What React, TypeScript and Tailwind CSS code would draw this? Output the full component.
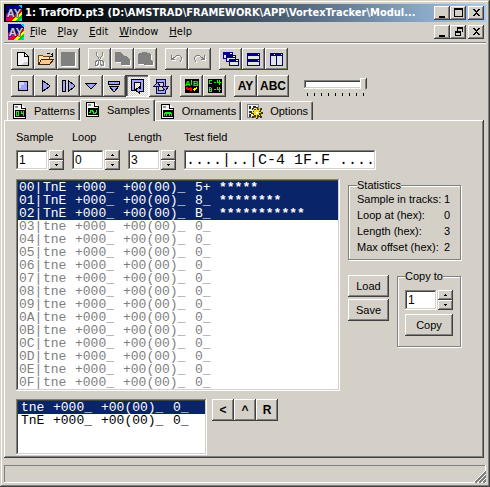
import { useState, type ReactNode } from 'react'
import clsx from 'clsx'

const RAISED = 'bg-[#d4d0c8] shadow-[inset_-1px_-1px_#404040,inset_1px_1px_#fff,inset_-2px_-2px_#808080]'
const SUNKEN =
  'bg-white shadow-[inset_-1px_-1px_#fff,inset_1px_1px_#808080,inset_-2px_-2px_#d4d0c8,inset_2px_2px_#404040]'
const CHECKED =
  'bg-[repeating-conic-gradient(#fff_0_25%,#d4d0c8_0_50%)] bg-size-[2px_2px] shadow-[inset_-1px_-1px_#fff,inset_1px_1px_#404040,inset_2px_2px_#808080]'
const GROUP = 'border border-[#808080] shadow-[1px_1px_#fff,inset_1px_1px_#fff]'

const MENU = ['File', 'Play', 'Edit', 'Window', 'Help']

const ACTIVE_ROWS = [
  { volume: '5+', level: 5 },
  { volume: '8_', level: 8 },
  { volume: 'B_', level: 11 },
]

const STATS = [
  ['Sample in tracks:', '1'],
  ['Loop at (hex):', '0'],
  ['Length (hex):', '3'],
  ['Max offset (hex):', '2'],
]

const Icon = ({ w = 16, h = 16, children }: { w?: number; h?: number; children: ReactNode }) => (
  <svg width={w} height={h} viewBox={`0 0 ${w} ${h}`} shapeRendering="crispEdges" fill="none" className="shrink-0">
    {children}
  </svg>
)

// disabled glyphs get a white copy one pixel down and right
const Etched = ({ d, solid, w, h }: { d: string; solid?: boolean; w?: number; h?: number }) => (
  <Icon w={w} h={h}>
    <path d={d} transform="translate(1 1)" fill={solid ? '#fff' : 'none'} stroke="#fff" />
    <path d={d} fill={solid ? '#808080' : 'none'} stroke="#808080" />
  </Icon>
)

const AppLogo = () => (
  <Icon>
    <rect width="16" height="16" fill="#000080" />
    <path d="M0 16V9L4 5l5 11z" fill="#c000a0" />
    <path d="M1 16L16 4v4L6 16z" fill="#f00" />
    <path d="M5 16L16 7v4l-6 5z" fill="#ff0" />
    <path d="M9 16l7-6v4l-2 2z" fill="#0c0" />
    <path d="M12 16l4-4v4z" fill="#0cf" />
    <path d="M12 0h4v4z" fill="#0cf" />
    <text
      x="8"
      y="12"
      textAnchor="middle"
      className="font-['Liberation_Sans',sans-serif] text-[11px] font-bold"
      fill="#c8c8d8"
      stroke="#202040"
      strokeWidth="1"
      paintOrder="stroke"
    >
      AY
    </text>
  </Icon>
)

const NewIcon = () => (
  <Icon w={12} h={14}>
    <path d="M.5.5h7l4 4v9H.5z" fill="#f4f4f4" stroke="#000" />
    <path d="M8 10h3v3H4z" fill="#d0d0d0" />
    <path d="M7.5.5v4h4" stroke="#000" />
  </Icon>
)

const OpenIcon = () => (
  <Icon w={16} h={14}>
    <path d="M.5 12.5v-9h4l1 1h6v3" fill="#ffe0b0" stroke="#804000" />
    <path d="M.5 12.5l3-5h12l-4 5z" fill="#ffc890" stroke="#402000" />
    <path d="M9 1.5h3M12.5 2.5h1M14.5 1v4M12 4.5h3" stroke="#000" />
  </Icon>
)

const CascadeIcon = () => (
  <Icon w={16} h={15}>
    {[0, 3, 6].map((n) => (
      <g key={n} transform={`translate(${n} ${n + (n > 3 ? 1 : 0)})`}>
        <path d="M0 0h10v7H0z" fill="#000080" />
        <path d="M1 3h8v3H1z" fill="#e4e4e4" />
        <path d="M7 1h2v1H7z" fill="#fff" />
      </g>
    ))}
  </Icon>
)

const TileIcon = ({ vertical }: { vertical?: boolean }) => (
  <Icon w={13} h={13}>
    <path d="M0 0h13v13H0z" fill="#000080" />
    {vertical ? (
      <path d="M1 3h5v9H1zM7 3h5v9H7zM4 1h1v1H4zM11 1h1v1h-1z" fill="#e4e4e4" />
    ) : (
      <path d="M1 3h11v3H1zM1 9h11v3H1zM11 1h1v1h-1zM11 7h1v1h-1z" fill="#e4e4e4" />
    )}
  </Icon>
)

const StopIcon = () => (
  <Icon w={10} h={10}>
    <path d="M.5.5h9v9h-9z" fill="#a0a4f8" stroke="#000" />
    <path d="M1 1h5v3H3v3H1z" fill="#d0d0ff" />
  </Icon>
)

const PlayIcon = ({ bar }: { bar?: boolean }) => (
  <Icon w={13} h={14}>
    {bar && <path d="M.5 1.5h3v11h-3z" fill="#a0a4f8" stroke="#000" />}
    <path d={bar ? 'M6.5 1.5v11l6-5v-1z' : 'M3.5 1.5v11l7-5v-1z'} fill="#a0a4f8" stroke="#000" />
  </Icon>
)

const DownIcon = ({ bar }: { bar?: boolean }) => (
  <Icon w={13} h={11}>
    {bar && <path d="M.5.5h11v3H.5z" fill="#a0a4f8" stroke="#000" />}
    <path d={bar ? 'M1.5 5.5h9l-4 5h-1z' : 'M.5 2.5h11l-5 5h-1z'} fill="#a0a4f8" stroke="#000" />
  </Icon>
)

const LoopIcon = () => (
  <Icon w={14} h={15}>
    <path d="M.5 11.5V.5h12v12h-4v2l-4-3.5 4-3.5v2h1v-6h-6v8z" fill="#a0a4f8" stroke="#000" />
  </Icon>
)

const LoopAllIcon = () => (
  <Icon w={16} h={15}>
    <path d="M3.5 5.5v-5h9v7M12.5 9.5v5h-9v-7" stroke="#101040" />
    <path d="M5.5 6.5v-3h5v4M10.5 8.5v3h-5v-5" stroke="#101040" />
    <path d="M4 1h8v2H4zM4 12h8v2H4zM4 3h1v9H4zM11 3h1v9h-1z" fill="#a0a4f8" />
    <path d="M.5 7.5l4-4 3 4zM8.5 7.5h7l-3 4z" fill="#a0a4f8" stroke="#101040" />
  </Icon>
)

const TracksIcon = () => (
  <Icon w={14} h={14}>
    <path d="M0 0h14v14H0z" fill="#000" />
    <path d="M6.5 1v5" stroke="#0f0" />
    <text x="0" y="7" className="font-['Liberation_Sans',sans-serif] text-[8px] font-bold" fill="#0f0">
      A
    </text>
    <text x="8" y="7" className="font-['Liberation_Sans',sans-serif] text-[8px] font-bold" fill="#0f0">
      B
    </text>
    <path d="M1 8h2v1h2V8l2 2v2H5v-1H2v-1H1z" fill="#f00" />
    <path d="M8 10l2-2v1h1V8h1v2h-1v1h-1v2L8 11z" fill="#ff0" />
  </Icon>
)

const TransposeIcon = () => (
  <Icon w={14} h={14}>
    <path d="M0 0h14v14H0z" fill="#000" />
    <path
      d="M1.5 1v4M1 1.5h3M1 4.5h3M6 3.5h2M9.5 1v3M9 3.5h4M11.5 1v5M1.5 8v5M1 8.5h2M1 10.5h2M1 12.5h3M3.5 9v3M6 10.5h2M9.5 8v3M9 10.5h4M11.5 8v5"
      stroke="#0f0"
    />
  </Icon>
)

const PageIcon = ({ kind }: { kind: 'pattern' | 'sample' | 'ornament' }) => (
  <Icon w={14} h={15}>
    <path d="M.5.5h8l4 4v10H.5z" fill="#f4f4f4" stroke="#000" />
    <path d="M8.5.5v4h4" fill="#fff" stroke="#000" />
    <path d="M2 2h3v2H2z" fill="#909090" />
    <path d="M2 6h10v7H2z" fill="#000" />
    {kind === 'pattern' && <path d="M3.5 7.5h2v4h-2zM8.5 7v3M8 9.5h3M10.5 7v5" stroke="#0f0" />}
    {kind === 'sample' && <path d="M3 10.5h1v-2h2v1h1v2h2v-1h1v-2h1" stroke="#0f0" />}
    {kind === 'ornament' && <path d="M3.5 12v-3h1v-1h2v1h1v-1h2v1h1v3M5.5 9v3M8.5 9v3" stroke="#0f0" />}
  </Icon>
)

const OptionsIcon = () => (
  <Icon w={16} h={15}>
    <path d="M.5.5h11v13H.5z" fill="#f0f0f0" stroke="#808080" />
    <path d="M2 2h2v3H2zM2 7h3v2H2zM2 10h2v3H2zM6 2h3v2H6z" fill="#303030" />
    <path d="M9 3h2v2h2V4h2v2h-1v2h2v2h-2v2h1v2h-2v-1h-2v2H9v-2H7v1H5v-2h1v-2H4V8h2V6H5V4h2v1h2z" fill="#403800" />
    <path d="M9 4h1v2h2V5h1v2h-1v1h2v1h-2v2h1v1h-1v-1h-2v3H9v-3H7v1H6v-1h1V9H5V8h2V7H6V5h1v1h2z" fill="#f0e020" />
    <path d="M9 8h2v2H9z" fill="#fff" />
  </Icon>
)

const CAPTION = {
  Minimize: 'M3 9h6v2H3z',
  Maximize: 'M2 1h9v9H2zM3 3v6h7V3z',
  Restore: 'M5 1h6v5H9v4H3V5h2zM6 3v2h3v1h1V3zM4 7v2h4V7z',
  Close: 'M3 2h2v1h1v1h1V3h1V2h2v1H9v1H8v1H7v1h1v1h1v1h1v1H8V8H7V7H6v1H5v1H3V8h1V7h1V6h1V5H5V4H4V3H3z',
}

const CaptionButtons = ({ names }: { names: (keyof typeof CAPTION)[] }) => (
  <div className="ml-auto flex pr-0.5">
    {names.map((name) => (
      <button
        key={name}
        type="button"
        aria-label={name}
        className={clsx('flex h-3.5 w-4 items-center justify-center', name === 'Close' && 'ml-0.5', RAISED)}
      >
        <Icon w={13} h={12}>
          <path d={CAPTION[name]} fill="#000" fillRule="evenodd" />
        </Icon>
      </button>
    ))}
  </div>
)

const ToolButton = ({
  label,
  wide,
  down,
  disabled,
  children,
}: {
  label: string
  wide?: boolean
  down?: boolean
  disabled?: boolean
  children: ReactNode
}) => (
  <button
    type="button"
    aria-label={label}
    aria-pressed={down}
    disabled={disabled}
    className={clsx(
      'flex h-[22px] items-center justify-center text-[12px] leading-none font-bold',
      wide ? 'w-8' : 'w-[23px]',
      down ? CHECKED : RAISED,
    )}
  >
    {children}
  </button>
)

const PushButton = ({ className, children }: { className?: string; children: ReactNode }) => (
  <button type="button" className={clsx('h-[22px] text-center', RAISED, className)}>
    {children}
  </button>
)

const Spinner = ({ id, initial, label }: { id: string; initial: number; label?: string }) => {
  const [value, setValue] = useState(initial)
  return (
    <div className="flex gap-px">
      <input
        id={id}
        aria-label={label}
        value={value}
        onChange={(e) => setValue(Number(e.target.value) || 0)}
        className={clsx('h-5 w-8 px-[3px] text-[12px] outline-none', SUNKEN)}
      />
      <div className="flex w-[15px] flex-col">
        {[1, -1].map((step) => (
          <button
            key={step}
            type="button"
            aria-label={step > 0 ? 'Increase' : 'Decrease'}
            onClick={() => setValue(value + step)}
            className={clsx('flex h-2.5 items-center justify-center', RAISED)}
          >
            <Icon w={3} h={2}>
              <path d={step > 0 ? 'M1 0h1v1h1v1H0V1h1z' : 'M0 0h3v1H2v1H1V1H0z'} fill="#000" />
            </Icon>
          </button>
        ))}
      </div>
    </div>
  )
}

const SampleRow = ({ index }: { index: number }) => {
  const row = ACTIVE_ROWS[index]
  return (
    <tr className={row ? 'bg-[#0a246a] text-white' : 'text-[#808080]'}>
      <td className="pl-px">{index.toString(16).toUpperCase().padStart(2, '0')}|</td>
      <td>{row ? 'TnE' : 'tne'}</td>
      <td>+000_</td>
      <td>+00(00)_</td>
      <td>{row ? row.volume : '0_'}</td>
      <td className="font-bold">{row && '*'.repeat(row.level)}</td>
    </tr>
  )
}

const Tab = ({ icon, selected, children }: { icon: ReactNode; selected?: boolean; children: ReactNode }) => (
  <button
    type="button"
    role="tab"
    aria-selected={!!selected}
    className={clsx(
      'flex items-center gap-[7px] rounded-t-xs border-t border-r border-l border-t-white border-r-[#404040] border-l-white bg-[#d4d0c8] pr-1 pl-[5px] shadow-[inset_-1px_0_#808080]',
      selected ? 'relative z-10 -mb-px h-[22px] pb-0.5' : 'h-[19px]',
    )}
  >
    {icon}
    {children}
  </button>
)

export default function App() {
  const [volume, setVolume] = useState(8)

  return (
    <div className="flex min-h-screen flex-col bg-[#d4d0c8] p-1 font-['Liberation_Sans',Arial,sans-serif] text-[11px] leading-3 text-black shadow-[inset_-1px_-1px_#404040,inset_1px_1px_#d4d0c8,inset_-2px_-2px_#808080,inset_2px_2px_#fff]">
      <header className="flex h-[18px] items-center bg-linear-to-r from-black to-[#a6caf0] pl-0.5 text-white">
        <AppLogo />
        <h1 className="ml-[3px] min-w-0 truncate font-['DejaVu_Sans_Condensed','DejaVu_Sans',sans-serif] text-[11px] leading-4 font-bold">
          1: TrafOfD.pt3 (D:\AMSTRAD\FRAMEWORK\APP\VortexTracker\Modul...
        </h1>
        <CaptionButtons names={['Minimize', 'Maximize', 'Close']} />
      </header>

      <nav className="flex h-5 items-center pl-1">
        <AppLogo />
        <div className="flex gap-[11px] pl-1.5 font-['DejaVu_Sans_Condensed','DejaVu_Sans',sans-serif]">
          {MENU.map((item) => (
            <button key={item} type="button">
              <u>{item[0]}</u>
              {item.slice(1)}
            </button>
          ))}
        </div>
        <CaptionButtons names={['Minimize', 'Restore', 'Close']} />
      </nav>
      <div className="h-0.5 border-t border-b border-t-[#808080] border-b-white" />

      <div className="flex flex-col gap-[5px] pt-1 pl-[7px]">
        <div className="flex gap-2">
          <div className="flex">
            <ToolButton label="New"><NewIcon /></ToolButton>
            <ToolButton label="Open"><OpenIcon /></ToolButton>
            <ToolButton label="Save" disabled>
              <Etched solid d="M.5.5h13v13H.5z" w={15} h={15} />
            </ToolButton>
          </div>
          <div className="flex">
            <ToolButton label="Cut" disabled>
              <Etched w={12} h={15} d="M2.5 0v3l2 3 1 2-3 1h-1v4h2l1-1v-3M8.5 0v3l-2 3-1 2 3 1h1v4h-2l-1-1v-3" />
            </ToolButton>
            <ToolButton label="Copy" disabled>
              <Etched solid w={16} h={15} d="M.5.5h5l3 3v1h3l3 3v5h-8v-3h-6z" />
            </ToolButton>
            <ToolButton label="Paste" disabled>
              <Etched solid w={16} h={15} d="M.5 2.5l2-1h2v-1h4v1h3l1 1v5l2 2v3h-8v-1h-6z" />
            </ToolButton>
          </div>
          <div className="flex">
            <ToolButton label="Undo" disabled>
              <Etched w={14} h={10} d="M1.5 1v5M1 5.5h4M2.5 4v1M3.5 3v2M4 3.5h1M5 2.5h1M6 1.5h4M10 2.5h1M11.5 3v3M10.5 6v2" />
            </ToolButton>
            <ToolButton label="Redo" disabled>
              <Etched w={14} h={10} d="M11.5 1v5M8 5.5h4M10.5 4v1M9.5 3v2M8 3.5h1M7 2.5h1M3 1.5h4M2 2.5h1M1.5 3v3M2.5 6v2" />
            </ToolButton>
          </div>
          <div className="flex">
            <ToolButton label="Cascade"><CascadeIcon /></ToolButton>
            <ToolButton label="Tile horizontally"><TileIcon /></ToolButton>
            <ToolButton label="Tile vertically"><TileIcon vertical /></ToolButton>
          </div>
        </div>

        <div className="flex gap-2">
          <div className="flex">
            <ToolButton label="Stop"><StopIcon /></ToolButton>
            <ToolButton label="Play"><PlayIcon /></ToolButton>
            <ToolButton label="Play from start"><PlayIcon bar /></ToolButton>
            <ToolButton label="Play pattern"><DownIcon /></ToolButton>
            <ToolButton label="Play pattern from start"><DownIcon bar /></ToolButton>
            <ToolButton label="Loop" down><LoopIcon /></ToolButton>
            <ToolButton label="Loop all"><LoopAllIcon /></ToolButton>
          </div>
          <div className="flex">
            <ToolButton label="Tracks manager"><TracksIcon /></ToolButton>
            <ToolButton label="Global transposition"><TransposeIcon /></ToolButton>
          </div>
          <div className="flex">
            <ToolButton label="Chip type">AY</ToolButton>
            <ToolButton label="Channel order" wide>ABC</ToolButton>
          </div>
          <div className="ml-[7px] flex w-[63px] flex-col gap-0.5 pt-0.5">
            <input
              type="range"
              aria-label="Volume"
              min={0}
              max={8}
              value={volume}
              onChange={(e) => setVolume(Number(e.target.value))}
              className="h-3.5 w-full appearance-none bg-transparent [&::-webkit-slider-runnable-track]:h-[9px] [&::-webkit-slider-runnable-track]:bg-white [&::-webkit-slider-runnable-track]:shadow-[inset_-1px_-1px_#fff,inset_1px_1px_#808080,inset_-2px_-2px_#d4d0c8,inset_2px_2px_#404040] [&::-webkit-slider-thumb]:-mt-0.5 [&::-webkit-slider-thumb]:h-3.5 [&::-webkit-slider-thumb]:w-[7px] [&::-webkit-slider-thumb]:appearance-none [&::-webkit-slider-thumb]:bg-[#d4d0c8] [&::-webkit-slider-thumb]:shadow-[inset_-1px_0_#404040,inset_1px_1px_#fff,inset_-2px_0_#808080] [&::-webkit-slider-thumb]:[clip-path:polygon(0_0,100%_0,100%_75%,50%_100%,0_75%)]"
            />
            <div className="flex justify-between px-[3px]">
              {Array.from({ length: 9 }, (_, i) => (
                <span key={i} className="h-[3px] w-px bg-black" />
              ))}
            </div>
          </div>
        </div>
      </div>

      <div role="tablist" className="mt-0.5 flex items-end pl-[3px]">
        <Tab icon={<PageIcon kind="pattern" />}>Patterns</Tab>
        <Tab icon={<PageIcon kind="sample" />} selected>Samples</Tab>
        <Tab icon={<PageIcon kind="ornament" />}>Ornaments</Tab>
        <Tab icon={<OptionsIcon />}>Options</Tab>
      </div>

      <main className="mr-0.5 flex flex-1 flex-col gap-2 pt-[11px] pr-[23px] pb-[3px] pl-3 shadow-[inset_-1px_-1px_#404040,inset_1px_1px_#fff,inset_-2px_-2px_#808080]">
        <div className="flex gap-2 pb-px">
          <div className="flex flex-col gap-[7px]">
            <label htmlFor="sample">Sample</label>
            <Spinner id="sample" initial={1} />
          </div>
          <div className="flex flex-col gap-[7px]">
            <label htmlFor="loop">Loop</label>
            <Spinner id="loop" initial={0} />
          </div>
          <div className="flex flex-col gap-[7px]">
            <label htmlFor="length">Length</label>
            <Spinner id="length" initial={3} />
          </div>
          <div className="flex flex-col gap-[7px]">
            <label htmlFor="test">Test field</label>
            <input
              id="test"
              defaultValue="....|..|C-4 1F.F ...."
              className={clsx(
                "h-5 w-48 px-0.5 font-['Liberation_Mono','Courier_New',monospace] text-[15px] outline-none",
                SUNKEN,
              )}
            />
          </div>
        </div>

        <div className="flex gap-2">
          <div className={clsx('min-w-0 flex-1 p-0.5', SUNKEN)}>
            <table className="w-full table-fixed font-['Liberation_Mono','Courier_New',monospace] text-[13px] leading-[13px] whitespace-nowrap">
              <colgroup>
                <col className="w-[25px]" />
                <col className="w-8" />
                <col className="w-12" />
                <col className="w-[72px]" />
                <col className="w-6" />
                <col />
              </colgroup>
              <tbody>
                {Array.from({ length: 16 }, (_, i) => (
                  <SampleRow key={i} index={i} />
                ))}
              </tbody>
            </table>
          </div>

          <div className="flex w-[113px] shrink-0 flex-col gap-2.5">
            <fieldset className={clsx('pr-2 pb-1 pl-2', GROUP)}>
              <legend className="bg-[#d4d0c8]">Statistics</legend>
              <dl className="leading-4">
                {STATS.map(([name, value]) => (
                  <div key={name} className="flex justify-between">
                    <dt>{name}</dt>
                    <dd className="w-2">{value}</dd>
                  </div>
                ))}
              </dl>
            </fieldset>
            <div className="flex justify-between">
              <div className="flex w-[41px] flex-col gap-0.5 pt-[5px]">
                <PushButton>Load</PushButton>
                <PushButton>Save</PushButton>
              </div>
              <fieldset className={clsx('w-16 px-[7px] pt-2 pb-2.5', GROUP)}>
                <legend className="bg-[#d4d0c8]">Copy to</legend>
                <Spinner id="copy-to" label="Copy to" initial={1} />
                <PushButton className="mt-1 w-full">Copy</PushButton>
              </fieldset>
            </div>
          </div>
        </div>

        <div className="flex gap-[5px]">
          <div className={clsx('h-14 w-[191px] p-0.5', SUNKEN)}>
            <table className="w-full table-fixed font-['Liberation_Mono','Courier_New',monospace] text-[13px] leading-[13px] whitespace-nowrap">
              <colgroup>
                <col className="w-[35px]" />
                <col className="w-12" />
                <col className="w-[72px]" />
                <col />
              </colgroup>
              <tbody>
                {['tne', 'TnE'].map((flags, i) => (
                  <tr key={flags} className={i === 0 ? 'bg-[#0a246a] text-white' : ''}>
                    <td className="pl-[3px]">{flags}</td>
                    <td>+000_</td>
                    <td>+00(00)_</td>
                    <td>0_</td>
                  </tr>
                ))}
              </tbody>
            </table>
          </div>
          <div className="flex">
            {['<', '^', 'R'].map((key) => (
              <PushButton key={key} className="w-[22px] text-[12px] font-bold">
                {key}
              </PushButton>
            ))}
          </div>
        </div>
      </main>

      <footer className="mt-[7px] flex h-[18px] items-end justify-end shadow-[inset_-1px_-1px_#fff,inset_1px_1px_#808080]">
        <Icon w={13} h={13}>
          <path d="M0 13L13 0M4 13l9-9M8 13l5-5" stroke="#fff" />
          <path d="M2 13L13 2M6 13l7-7M10 13l3-3" stroke="#808080" strokeWidth="2" />
        </Icon>
      </footer>
    </div>
  )
}
